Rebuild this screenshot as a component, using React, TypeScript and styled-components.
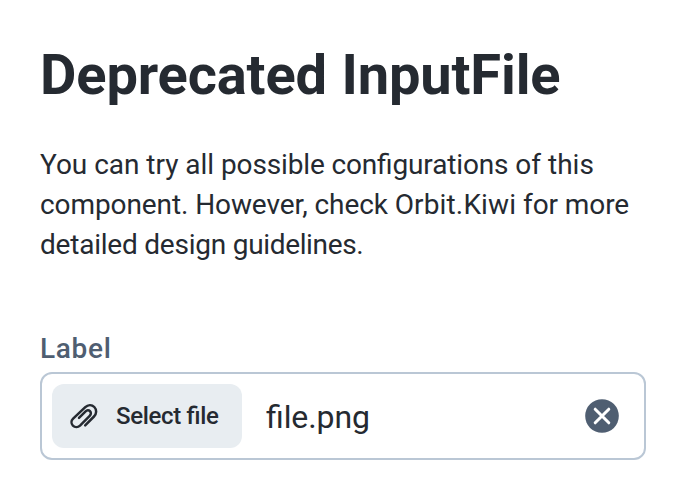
import React from "react";
import styled, { createGlobalStyle } from "styled-components";

const GlobalStyle = createGlobalStyle`
  *, *::before, *::after { box-sizing: border-box; }
  body { margin: 0; background: #fff; font-family: Roboto, "Liberation Sans", sans-serif; color: #252a31; }
`;
const Page = styled.main`
  padding: 40px;
  width: 686px;
`;
const Title = styled.h1`
  margin: 0;
  font-size: 56px;
  line-height: 70px;
  font-weight: 700;
  letter-spacing: -0.13px;
  word-spacing: 0.7px;
`;
const Description = styled.p`
  margin: 35px 0 0;
  font-size: 28px;
  line-height: 40px;
  font-feature-settings: "liga" 1;
`;
const Line = styled.span`
  display: block;
  white-space: pre;
`;
const Phrase = styled.span<{ $tracking: number }>`
  letter-spacing: ${(p) => p.$tracking}px;
`;
const Field = styled.div`
  display: flex;
  flex-direction: column;
  margin-top: 64px;
`;
const Label = styled.label`
  font-size: 28px;
  line-height: 40px;
  font-weight: 500;
  color: #4f5e71;
  letter-spacing: 0.7px;
  margin-bottom: 3px;
`;
const FakeInput = styled.div`
  display: flex;
  align-items: center;
  height: 88px;
  padding: 0 22px 0 10px;
  border: 2px solid #bac7d5;
  border-radius: 12px;
`;
const SelectButton = styled.button`
  display: flex;
  align-items: center;
  width: 190px;
  height: 64px;
  padding: 0 16px;
  gap: 16px;
  border: 0;
  border-radius: 12px;
  background: #e8edf1;
  color: #252a31;
  font: 500 24px/32px Roboto, "Liberation Sans", sans-serif;
  white-space: nowrap;
`;
const ButtonText = styled.span`
  letter-spacing: -0.34px;
  font-feature-settings: "liga" 1;
`;
const FileName = styled.div`
  flex: 1;
  margin: 2px 0 0 24px;
  font-size: 32px;
  line-height: 48px;
  letter-spacing: -0.1px;
  font-feature-settings: "liga" 1;
`;
const ClearButton = styled.button`
  display: flex;
  padding: 0;
  border: 0;
  background: none;
  color: #4f5e71;
`;

const AttachmentIcon = () => (
  <svg width="32" height="32" viewBox="0 0 32 32" fill="none" stroke="currentColor" strokeWidth="2.5" strokeLinecap="round" strokeLinejoin="round">
    <path d="M17.2 25.3 26 16.5C28.700 13.800 28.900 9.700 26.300 7C23.700 4.400 19.900 4.700 17.300 7.200L5.100 18.600C3.100 20.600 3 23.700 4.900 25.700C6.900 27.700 10 27.500 12 25.600L21.700 15.900C23.100 14.500 23.300 12.500 22 11.200C20.700 9.900 18.900 10.100 17.600 11.400L11 17.900" />
  </svg>
);
const CloseCircleIcon = () => (
  <svg width="40" height="40" viewBox="0 0 40 40">
    <circle cx="20" cy="20" r="16.8" fill="currentColor" />
    <path d="m13.200 13.200 13.600 13.600m0-13.600-13.600 13.600" stroke="#fff" strokeWidth="3" strokeLinecap="round" />
  </svg>
);

const description = [
  [
    { text: "You can try all ", tracking: -0.03 },
    { text: "possible configurations", tracking: -0.14 },
    { text: " of this", tracking: 0 },
  ],
  [
    { text: "component. However, check ", tracking: -0.09 },
    { text: "Orbit.Kiwi", tracking: 0.15 },
    { text: " for more", tracking: -0.1 },
  ],
  [
    { text: "detailed design ", tracking: -0.22 },
    { text: "guidelines.", tracking: -0.34 },
  ],
];

export default function App() {
  return (
    <>
      <GlobalStyle />
      <Page>
        <Title>Deprecated InputFile</Title>
        <Description>
          {description.map((line, i) => (
            <Line key={i}>
              {line.map((phrase) => (
                <Phrase key={phrase.text} $tracking={phrase.tracking}>{phrase.text}</Phrase>
              ))}
            </Line>
          ))}
        </Description>
        <Field>
          <Label>Label</Label>
          <FakeInput>
            <SelectButton type="button"><AttachmentIcon /><ButtonText>Select file</ButtonText></SelectButton>
            <FileName>file.png</FileName>
            <ClearButton type="button" aria-label="Clear file"><CloseCircleIcon /></ClearButton>
          </FakeInput>
        </Field>
      </Page>
    </>
  );
}
